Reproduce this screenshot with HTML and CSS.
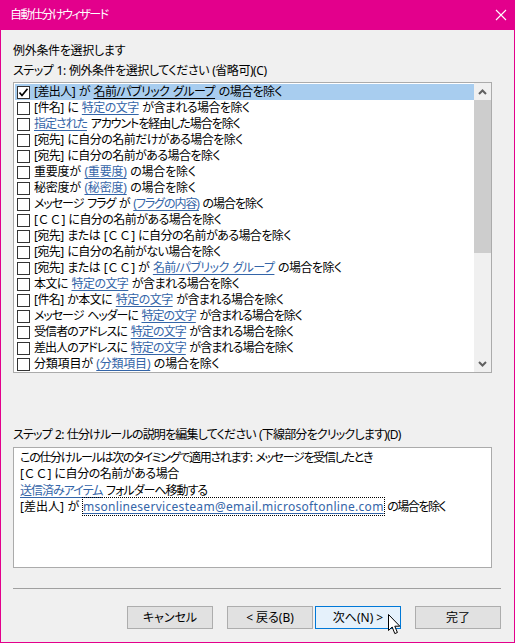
FILE: index.html
```html
<!DOCTYPE html>
<html lang="ja">
<head>
<meta charset="utf-8">
<title>自動仕分けウィザード</title>
<link rel="stylesheet" href="styles.css">
</head>
<body>
<div class="window">
  <div class="titlebar">
    <span class="title">自動仕分けウィザード</span>
    <svg class="close" width="12" height="12" viewBox="0 0 12 12"><path d="M1 1L11 11M11 1L1 11" stroke="#fff" stroke-width="1.1" fill="none"/></svg>
  </div>
  <div class="body">
    <div class="label head">例外条件を選択します</div>
    <div class="label step1">ステップ 1: 例外条件を選択してください (省略可)(C)</div>
    <div class="listbox">
      <div class="rows">
        <div class="row sel"><span class="cb"><svg width="11" height="11" viewBox="0 0 11 11"><path d="M1.5 5.5L4 8.5L9.5 1.8" stroke="#000" stroke-width="1.7" fill="none"/></svg></span><span>[差出人] が <u class="lk">名前/パブリック グループ</u> の場合を除く</span></div>
        <div class="row"><span class="cb"></span><span>[件名] に <u class="lk">特定の文字</u> が含まれる場合を除く</span></div>
        <div class="row tight"><span class="cb"></span><span><u class="lk">指定された</u> アカウントを経由した場合を除く</span></div>
        <div class="row"><span class="cb"></span><span>[宛先] に自分の名前だけがある場合を除く</span></div>
        <div class="row"><span class="cb"></span><span>[宛先] に自分の名前がある場合を除く</span></div>
        <div class="row loose"><span class="cb"></span><span>重要度が <u class="lk">(重要度)</u> の場合を除く</span></div>
        <div class="row loose"><span class="cb"></span><span>秘密度が <u class="lk">(秘密度)</u> の場合を除く</span></div>
        <div class="row tight"><span class="cb"></span><span>メッセージ フラグ が <u class="lk">(フラグの内容)</u> の場合を除く</span></div>
        <div class="row"><span class="cb"></span><span>[<span class="fw">ＣＣ</span>] に自分の名前がある場合を除く</span></div>
        <div class="row"><span class="cb"></span><span>[宛先] または [<span class="fw">ＣＣ</span>] に自分の名前がある場合を除く</span></div>
        <div class="row"><span class="cb"></span><span>[宛先] に自分の名前がない場合を除く</span></div>
        <div class="row"><span class="cb"></span><span>[宛先] または [<span class="fw">ＣＣ</span>] が <u class="lk">名前/パブリック グループ</u> の場合を除く</span></div>
        <div class="row"><span class="cb"></span><span>本文に <u class="lk">特定の文字</u> が含まれる場合を除く</span></div>
        <div class="row"><span class="cb"></span><span>[件名] か本文に <u class="lk">特定の文字</u> が含まれる場合を除く</span></div>
        <div class="row tight"><span class="cb"></span><span>メッセージ ヘッダーに <u class="lk">特定の文字</u> が含まれる場合を除く</span></div>
        <div class="row semi"><span class="cb"></span><span>受信者のアドレスに <u class="lk">特定の文字</u> が含まれる場合を除く</span></div>
        <div class="row semi"><span class="cb"></span><span>差出人のアドレスに <u class="lk">特定の文字</u> が含まれる場合を除く</span></div>
        <div class="row loose"><span class="cb"></span><span>分類項目が <u class="lk">(分類項目)</u> の場合を除く</span></div>
      </div>
      <div class="scrollbar">
        <div class="arrow"><svg width="9" height="6" viewBox="0 0 9 6"><path d="M1 5L4.5 1.5L8 5" stroke="#606060" stroke-width="2" fill="none"/></svg></div>
        <div class="thumb"></div>
        <div class="track"></div>
        <div class="arrow"><svg width="9" height="6" viewBox="0 0 9 6"><path d="M1 1L4.5 4.5L8 1" stroke="#606060" stroke-width="2" fill="none"/></svg></div>
      </div>
    </div>
    <div class="label step2">ステップ 2: 仕分けルールの説明を編集してください (下線部分をクリックします)(D)</div>
    <div class="desc">
      <div class="dline d1">この仕分けルールは次のタイミングで適用されます: メッセージを受信したとき</div>
      <div class="dline d2">[<span class="fw">ＣＣ</span>] に自分の名前がある場合</div>
      <div class="dline d3"><u class="lk">送信済みアイテム</u> フォルダーへ移動する</div>
      <div class="dline">[差出人] が <u class="lk focus">msonlineservicesteam@email.microsoftonline.com</u> <span class="suffix">の場合を除く</span></div>
    </div>
    <div class="sep"></div>
    <div class="buttons">
      <div class="btn">キャンセル</div>
      <div class="btn gap">&lt; 戻る(B)</div>
      <div class="btn hover">次へ(N) &gt;</div>
      <div class="btn gap">完了</div>
    </div>
  </div>
  <svg class="cursor" width="14" height="22" viewBox="0 0 14 22"><path d="M0.5 0.5L0.5 16.5L4.2 13L6.8 19.6L9.4 18.5L6.8 12.2L11.8 12.2Z" fill="#fff" stroke="#000" stroke-width="1" stroke-linejoin="miter"/></svg>
</div>
</body>
</html>
```

FILE: styles.css
```css
html, body {
  margin: 0;
  padding: 0;
  background: #F0F0F0;
}
body {
  font-family: "Noto Sans", "Noto Sans CJK JP", sans-serif;
  font-size: 12px;
  color: #000;
  font-feature-settings: "palt";
}
.window {
  width: 515px;
  height: 643px;
  display: flex;
  flex-direction: column;
  position: relative;
  background: #F0F0F0;
}
.titlebar {
  height: 30px;
  flex: none;
  background: #E3008C;
  color: #fff;
  display: flex;
  align-items: center;
  justify-content: space-between;
  padding: 0 10px 0 10px;
}
.title {
  font-size: 12px;
  line-height: 16px;
  letter-spacing: -1.5px;
}
.close {
  margin-right: -2px;
}
.body {
  flex: 1;
  border: 1px solid #E3008C;
  border-top: 0;
  padding: 13px 13px 0 12px;
  display: flex;
  flex-direction: column;
}
.label {
  line-height: 16px;
  height: 16px;
  white-space: nowrap;
}
.head {
  letter-spacing: -0.3px;
}
.step1 {
  margin-top: 4px;
  letter-spacing: -0.45px;
  word-spacing: 0.5px;
}
.fw {
  font-feature-settings: normal;
  letter-spacing: 0;
}
.listbox {
  margin-top: 3px;
  width: 479px;
  height: 291px;
  box-sizing: border-box;
  border: 1px solid #ABABAB;
  background: #fff;
  display: flex;
}
.rows {
  flex: 1;
  padding: 1px 0 0 1px;
  display: flex;
  flex-direction: column;
}
.row {
  height: 16px;
  line-height: 16px;
  display: flex;
  align-items: center;
  white-space: nowrap;
  overflow: hidden;
  letter-spacing: -0.55px;
  word-spacing: 1px;
}
.row.tight {
  letter-spacing: -1.05px;
  word-spacing: 1.6px;
}
.row.semi {
  letter-spacing: -0.9px;
  word-spacing: 1.4px;
}
.row.loose {
  letter-spacing: -0.2px;
  word-spacing: 0.6px;
}
.row.sel {
  background: #A8CDEF;
}
.cb {
  width: 11px;
  height: 11px;
  border: 1px solid #333;
  background: #fff;
  margin: 0 4px 0 2px;
  flex: none;
  display: flex;
  align-items: center;
  justify-content: center;
}
.cb svg {
  display: block;
}
.lk {
  color: #3465A8;
  text-decoration: underline;
  text-underline-offset: 2px;
}
.sel .lk {
  color: #000;
}
.scrollbar {
  width: 17px;
  flex: none;
  background: #F0F0F0;
  display: flex;
  flex-direction: column;
  padding-top: 1px;
}
.arrow {
  height: 16px;
  display: flex;
  align-items: center;
  justify-content: center;
}
.thumb {
  height: 153px;
  background: #CDCDCD;
}
.track {
  flex: 1;
}
.step2 {
  margin-top: 54px;
  letter-spacing: -0.8px;
  word-spacing: 0.8px;
}
.desc {
  margin-top: 4px;
  width: 479px;
  height: 121px;
  box-sizing: border-box;
  border: 1px solid #ABABAB;
  background: #fff;
  padding: 2px 0 0 6px;
}
.dline {
  height: 16.3px;
  line-height: 16px;
  white-space: nowrap;
  word-spacing: 0.5px;
}
.d1 {
  letter-spacing: -1.3px;
  word-spacing: 1.8px;
}
.d2 {
  letter-spacing: -0.45px;
  word-spacing: 0.8px;
}
.d3 {
  letter-spacing: -1px;
  word-spacing: 1.4px;
}
.suffix {
  letter-spacing: -1.5px;
}
.focus {
  outline: 1px dotted #000;
  outline-offset: 0;
  letter-spacing: 0.3px;
  word-spacing: 0;
}
.sep {
  margin-top: 20px;
  height: 1px;
  background: #A0A0A0;
  width: 488px;
}
.buttons {
  margin-top: 17px;
  display: flex;
  justify-content: flex-end;
  gap: 2px;
}
.btn {
  width: 86px;
  height: 23px;
  box-sizing: border-box;
  border: 1px solid #ADADAD;
  background: #E1E1E1;
  display: flex;
  align-items: center;
  justify-content: center;
  line-height: 16px;
}
.btn.gap {
  margin-left: 12px;
}
.btn.hover {
  background: #E5F1FB;
  border-color: #0078D7;
}
.cursor {
  position: absolute;
  left: 388px;
  top: 614px;
}
```
